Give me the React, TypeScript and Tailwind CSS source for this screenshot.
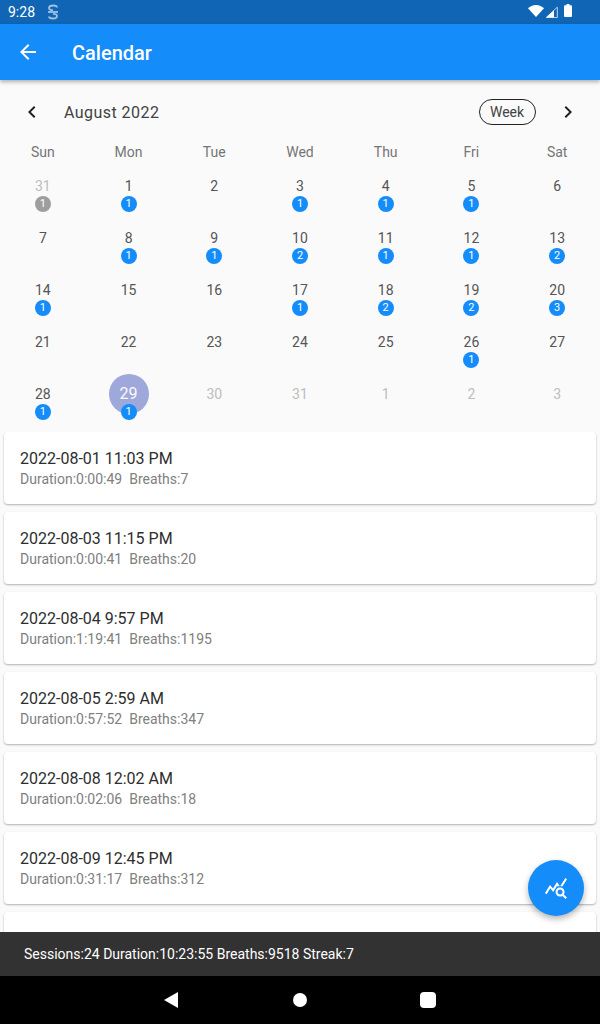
import React from "react";

const WEEKDAYS = ["Sun", "Mon", "Tue", "Wed", "Thu", "Fri", "Sat"];

type Day = { n: number; count?: number; muted?: boolean; selected?: boolean };

const DAYS: Day[] = [
  { n: 31, count: 1, muted: true },
  { n: 1, count: 1 },
  { n: 2 },
  { n: 3, count: 1 },
  { n: 4, count: 1 },
  { n: 5, count: 1 },
  { n: 6 },
  { n: 7 },
  { n: 8, count: 1 },
  { n: 9, count: 1 },
  { n: 10, count: 2 },
  { n: 11, count: 1 },
  { n: 12, count: 1 },
  { n: 13, count: 2 },
  { n: 14, count: 1 },
  { n: 15 },
  { n: 16 },
  { n: 17, count: 1 },
  { n: 18, count: 2 },
  { n: 19, count: 2 },
  { n: 20, count: 3 },
  { n: 21 },
  { n: 22 },
  { n: 23 },
  { n: 24 },
  { n: 25 },
  { n: 26, count: 1 },
  { n: 27 },
  { n: 28, count: 1 },
  { n: 29, count: 1, selected: true },
  { n: 30, muted: true },
  { n: 31, muted: true },
  { n: 1, muted: true },
  { n: 2, muted: true },
  { n: 3, muted: true },
];

const SESSIONS = [
  { when: "2022-08-01 11:03 PM", duration: "0:00:49", breaths: 7 },
  { when: "2022-08-03 11:15 PM", duration: "0:00:41", breaths: 20 },
  { when: "2022-08-04 9:57 PM", duration: "1:19:41", breaths: 1195 },
  { when: "2022-08-05 2:59 AM", duration: "0:57:52", breaths: 347 },
  { when: "2022-08-08 12:02 AM", duration: "0:02:06", breaths: 18 },
  { when: "2022-08-09 12:45 PM", duration: "0:31:17", breaths: 312 },
];

function StatusBar() {
  return (
    <div className="h-6 shrink-0 flex items-center bg-[#1066b4] pl-2 pr-[28px] text-white">
      <span className="text-[14px] leading-none">9:28</span>
      {/* notification glyph */}
      <svg width="12" height="16" viewBox="0 0 12 16" className="ml-[12px] opacity-60" fill="none" stroke="white" strokeWidth="1.8">
        <path d="M10 3.500C10 2 8.500 1.500 6 1.500S2 2.200 2 4s1.500 2.200 4 2.200" />
        <path d="M2 12.500c0 1.500 1.500 2 4 2s4-.7 4-2.500-1.500-2.200-4-2.200" />
        <path d="M1 8h10" />
      </svg>
      <div className="flex-1" />
      <svg width="16" height="12" viewBox="0 0 16 12" fill="white" className="-mt-[2px]">
        <path d="M0 3.200C2 1.300 4.800 0 8 0s6 1.300 8 3.200L8 12z" />
      </svg>
      <svg width="13" height="12" viewBox="0 0 13 12" className="ml-[1px] -mt-px">
        <path d="M12.300 1.200V11.500H1.200z" fill="none" stroke="#b9d4ee" strokeWidth="1" />
        <path d="M9 4.300V11.500H1.200z" fill="white" />
      </svg>
      <svg width="8" height="13" viewBox="0 0 8 13" fill="white" className="ml-[6px] -mt-[3px]">
        <path d="M2.500 0h3v1.300H7a1 1 0 0 1 1 1V12a1 1 0 0 1-1 1H1a1 1 0 0 1-1-1V2.300a1 1 0 0 1 1-1h1.500z" />
      </svg>
    </div>
  );
}

function AppBar() {
  return (
    <div className="h-14 shrink-0 flex items-center bg-[#148cfa] pl-4 text-white shadow-[0_2px_4px_rgba(0,0,0,0.3)] z-10">
      <svg width="24" height="24" viewBox="0 0 24 24" fill="white">
        <path d="M20 11H7.830l5.590-5.590L12 4l-8 8 8 8 1.410-1.410L7.830 13H20v-2z" />
      </svg>
      <span className="ml-8 text-[20px] font-medium pt-px">Calendar</span>
    </div>
  );
}

function Chevron({ right }: { right?: boolean }) {
  return (
    <svg width="24" height="24" viewBox="0 0 24 24" fill="#212121">
      <path d={right ? "M10 6L8.590 7.410 13.170 12l-4.580 4.590L10 18l6-6z" : "M15.410 7.410L14 6l-6 6 6 6 1.410-1.410L10.830 12z"} />
    </svg>
  );
}

function DayCell({ day }: { day: Day }) {
  return (
    <div className="relative h-[52px] flex items-center justify-center">
      {day.selected && <div className="absolute w-10 h-10 rounded-full bg-[#9fa8da]" />}
      <span
        className={
          "relative " +
          (day.selected ? "text-[16px] text-[#fafafa]" : day.muted ? "text-[14px] text-[#bdbdbd]" : "text-[14px] text-[#555555]")
        }
      >
        {day.n}
      </span>
      {day.count && (
        <span
          className={
            "absolute left-1/2 -ml-2 top-[36px] w-4 h-4 rounded-full flex items-center justify-center text-[11px] text-white " +
            (day.muted ? "bg-[#9e9e9e]" : "bg-[#148cfa]")
          }
        >
          {day.count}
        </span>
      )}
    </div>
  );
}

function Calendar() {
  return (
    <div className="shrink-0 h-[352px]">
      <div className="h-16 flex items-center pl-5 pr-5">
        <Chevron />
        <span className="ml-5 pt-px text-[16px] tracking-[0.45px] text-[#424242]">August 2022</span>
        <div className="flex-1" />
        <span className="h-[26px] w-[57px] flex items-center justify-center rounded-full border border-[#212121] text-[14px] text-[#424242] pr-px">
          Week
        </span>
        <div className="ml-5">
          <Chevron right />
        </div>
      </div>
      <div className="grid grid-cols-7 h-4">
        {WEEKDAYS.map((d) => (
          <div key={d} className="h-4 flex items-center justify-center text-[14px] text-[#757575]">
            {d}
          </div>
        ))}
      </div>
      <div className="grid grid-cols-7">
        {DAYS.map((d, i) => (
          <DayCell key={i} day={d} />
        ))}
      </div>
    </div>
  );
}

export default function App() {
  return (
    <div className="relative w-[600px] h-[1024px] flex flex-col overflow-hidden bg-[#fafafa] font-['Roboto',sans-serif]">
      <StatusBar />
      <AppBar />
      <Calendar />

      {/* Session list */}
      <div className="flex-1 min-h-0 overflow-hidden px-1 flex flex-col gap-2">
        {SESSIONS.map((s) => (
          <div key={s.when} className="h-[72px] shrink-0 rounded bg-white px-4 pt-4 shadow-[0_1px_2px_rgba(0,0,0,0.3)]">
            <div className="text-[16px] leading-[22px] text-[#2e2e2e]">{s.when}</div>
            <div className="text-[14px] leading-[18px] text-[#808080]">
              Duration:{s.duration}&nbsp; Breaths:{s.breaths}
            </div>
          </div>
        ))}
        {/* next row, only its top shows above the snackbar */}
        <div className="h-[72px] shrink-0 rounded bg-white shadow-[0_1px_2px_rgba(0,0,0,0.3)]" />
      </div>

      <div className="h-11 shrink-0 flex items-center bg-[#323232] px-6 text-[14px] text-white">
        Sessions:24 Duration:10:23:55 Breaths:9518 Streak:7
      </div>

      {/* Android nav bar */}
      <div className="h-12 shrink-0 bg-black flex items-center justify-center pr-px">
        <svg width="16" height="16" viewBox="0 0 16 16" fill="white">
          <path d="M15 0v16L1 8z" />
        </svg>
        <div className="ml-[114px] w-[14px] h-[14px] rounded-full bg-white" />
        <div className="ml-[113px] w-4 h-4 rounded-sm bg-white" />
      </div>

      {/* FAB */}
      <div className="absolute right-4 top-[860px] w-14 h-14 rounded-full bg-[#148cfa] flex items-center justify-center shadow-[0_3px_6px_rgba(0,0,0,0.3)]">
        <svg width="24" height="24" viewBox="0 0 24 24" fill="white">
          <path d="M19.880 18.470c.44-.7.7-1.510.7-2.390 0-2.490-2.010-4.500-4.500-4.500s-4.500 2.010-4.500 4.500 2.010 4.500 4.490 4.500c.88 0 1.700-.26 2.390-.7L21.580 23 23 21.580l-3.120-3.110zm-3.800.11c-1.380 0-2.500-1.120-2.500-2.500s1.120-2.500 2.500-2.500 2.500 1.120 2.500 2.500-1.120 2.500-2.500 2.500zm-.36-8.500c-.74.02-1.450.18-2.100.45l-.55-.83-3.800 6.180-3.010-3.520-3.630 5.810L1 17l5-8 3 3.500L13 6l2.720 4.080zm2.590.5c-.64-.28-1.330-.45-2.050-.49L21.380 2 23 3.180l-4.690 7.400z" />
        </svg>
      </div>
    </div>
  );
}
